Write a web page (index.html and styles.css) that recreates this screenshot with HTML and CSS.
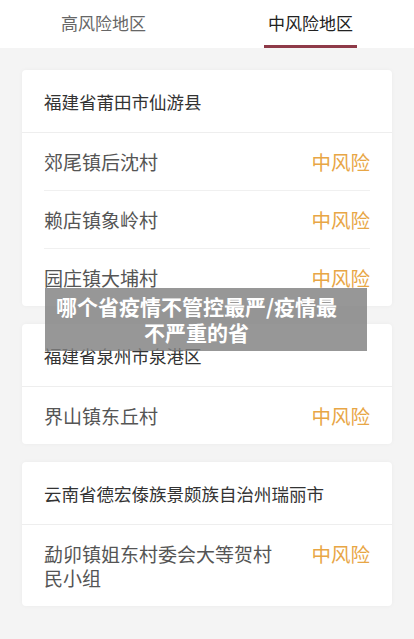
FILE: index.html
```html
<!DOCTYPE html>
<html lang="zh">
<head>
<meta charset="utf-8">
<link rel="stylesheet" href="styles.css">
</head>
<body>
<div class="tabs">
  <div class="tab">高风险地区</div>
  <div class="tab active">中风险地区</div>
</div>
<main class="list">
  <section class="card">
    <div class="card-head">福建省莆田市仙游县</div>
    <div class="rows">
      <div class="row"><span class="name">郊尾镇后沈村</span><span class="level">中风险</span></div>
      <div class="row"><span class="name">赖店镇象岭村</span><span class="level">中风险</span></div>
      <div class="row"><span class="name">园庄镇大埔村</span><span class="level">中风险</span></div>
    </div>
  </section>
  <section class="card">
    <div class="card-head">福建省泉州市泉港区</div>
    <div class="rows">
      <div class="row"><span class="name">界山镇东丘村</span><span class="level">中风险</span></div>
    </div>
  </section>
  <section class="card">
    <div class="card-head">云南省德宏傣族景颇族自治州瑞丽市</div>
    <div class="rows">
      <div class="row"><span class="name">勐卯镇姐东村委会大等贺村民小组</span><span class="level">中风险</span></div>
    </div>
  </section>
</main>
<div class="banner">哪个省疫情不管控最严/疫情最不严重的省</div>
</body>
</html>
```
FILE: styles.css
```css
* { box-sizing: border-box; }
html, body {
  margin: 0;
  padding: 0;
  background: #f4f4f4;
  font-family: "Noto Sans CJK SC", "Noto Sans", sans-serif;
}
body { position: relative; height: 639px; overflow: hidden; }
.tabs {
  display: flex;
  height: 48px;
  background: #fff;
}
.tab {
  flex: 1;
  display: flex;
  justify-content: center;
  align-items: flex-start;
  padding-top: 10px;
  font-size: 17px;
  line-height: 26px;
  color: #666;
  position: relative;
}
.tab.active { color: #222; }
.tab.active::after {
  content: "";
  position: absolute;
  left: 57px;
  width: 93px;
  top: 45px;
  height: 3px;
  background: #8e3a48;
}
.list {
  display: flex;
  flex-direction: column;
  gap: 18px;
  padding: 22px 22px 0;
}
.card {
  background: #fff;
  border-radius: 4px;
  box-shadow: 0 0 4px rgba(0,0,0,0.04);
}
.card-head {
  padding: 20px 22px 18px;
  font-size: 17.5px;
  line-height: 24px;
  color: #333;
  border-bottom: 1px solid #eeeeee;
}
.rows { padding: 0 22px; }
.row {
  display: flex;
  justify-content: space-between;
  align-items: flex-start;
  padding: 17px 0 16px;
  border-bottom: 1px solid #f0f0f0;
}
.row:last-child { border-bottom: none; }
.name {
  max-width: 240px;
  font-size: 19px;
  line-height: 24px;
  color: #555;
}
.level {
  font-size: 19.5px;
  line-height: 24px;
  color: #e8a645;
  white-space: nowrap;
}
.banner {
  position: absolute;
  left: 45px;
  top: 288px;
  width: 322px;
  height: 63px;
  padding: 5px 29px 0 10px;
  background: rgba(128,128,128,0.82);
  color: #fff;
  font-weight: 700;
  font-size: 21px;
  line-height: 26px;
  text-align: center;
}
```
